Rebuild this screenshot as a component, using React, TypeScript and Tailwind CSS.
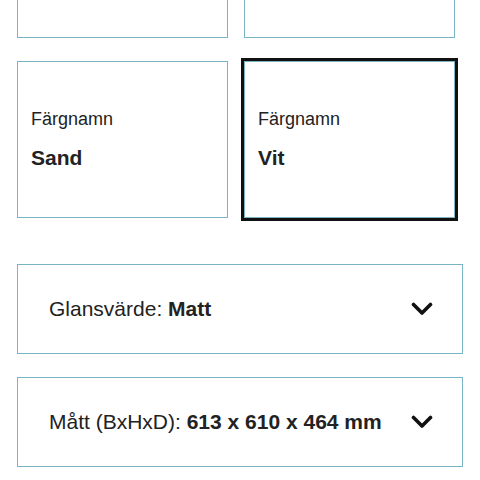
const teal = "border-[#7ab5c5]";

function ColorCard({ label, name, selected }: { label?: string; name?: string; selected?: boolean }) {
  return (
    <div
      className={`flex h-[157px] flex-col justify-center gap-[13px] border ${teal} bg-white px-[13px] ${
        selected ? "outline-[3px] outline-solid outline-[#111]" : ""
      }`}
    >
      {label && <span className="text-[18px] leading-[24px] text-[#222]">{label}</span>}
      {name && <span className="text-[21px] font-bold leading-[28px] text-[#222]">{name}</span>}
    </div>
  );
}

function Chevron() {
  return (
    <svg width="22" height="14" viewBox="0 0 22 14" fill="none" aria-hidden>
      <polyline points="2.5,2.5 11,11 19.5,2.5" stroke="#111" strokeWidth="3.6" strokeLinecap="round" strokeLinejoin="round" />
    </svg>
  );
}

function Accordion({ label, value }: { label: string; value: string }) {
  return (
    <button
      type="button"
      className={`flex h-[90px] w-[446px] items-center justify-between border ${teal} bg-white pl-[31px] pr-[29px] text-left`}
    >
      <span className="text-[21px] leading-[28px] text-[#222]">
        {label} <span className="font-bold">{value}</span>
      </span>
      <Chevron />
    </button>
  );
}

export default function App() {
  return (
    <div className="h-[480px] overflow-hidden bg-white font-['Liberation_Sans',Arial,sans-serif]">
      <div className="mt-[-119px] pl-[17px]">
        <div className="grid grid-cols-[211px_211px] gap-x-4 gap-y-[23px]">
          <ColorCard />
          <ColorCard />
          <ColorCard label="Färgnamn" name="Sand" />
          <ColorCard label="Färgnamn" name="Vit" selected />
        </div>
        <div className="mt-[46px] flex flex-col gap-[23px]">
          <Accordion label="Glansvärde:" value="Matt" />
          <Accordion label="Mått (BxHxD):" value="613 x 610 x 464 mm" />
        </div>
      </div>
    </div>
  );
}
